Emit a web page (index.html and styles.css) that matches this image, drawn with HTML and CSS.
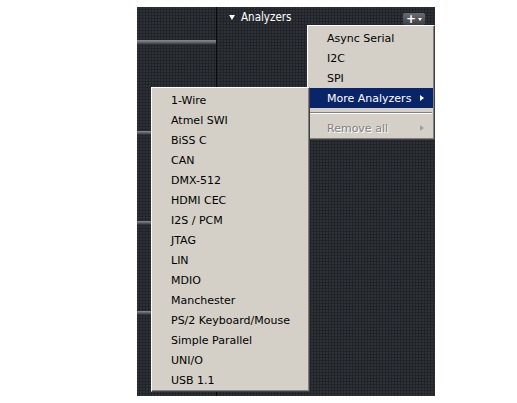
FILE: index.html
```html
<!DOCTYPE html>
<html>
<head>
<meta charset="utf-8">
<link rel="stylesheet" href="styles.css">
</head>
<body>
<div class="panel">
  <div class="side">
    <div class="seg first"></div>
    <div class="seg"></div>
    <div class="seg"></div>
    <div class="seg"></div>
    <div class="seg last"></div>
  </div>
  <div class="divider"></div>
  <div class="main">
    <div class="header">
      <span class="caret"></span>
      <span class="title">Analyzers</span>
      <span class="addbtn"><span class="plus">+</span><span class="dd"></span></span>
    </div>
  </div>

  <div class="menu menu-top">
    <div class="item">Async Serial</div>
    <div class="item">I2C</div>
    <div class="item">SPI</div>
    <div class="item active">More Analyzers<span class="arrow"></span></div>
    <div class="sep"></div>
    <div class="item disabled">Remove all<span class="arrow"></span></div>
  </div>

  <div class="menu menu-sub">
    <div class="item">1-Wire</div>
    <div class="item">Atmel SWI</div>
    <div class="item">BiSS C</div>
    <div class="item">CAN</div>
    <div class="item">DMX-512</div>
    <div class="item">HDMI CEC</div>
    <div class="item">I2S / PCM</div>
    <div class="item">JTAG</div>
    <div class="item">LIN</div>
    <div class="item">MDIO</div>
    <div class="item">Manchester</div>
    <div class="item">PS/2 Keyboard/Mouse</div>
    <div class="item">Simple Parallel</div>
    <div class="item">UNI/O</div>
    <div class="item">USB 1.1</div>
  </div>
</div>
</body>
</html>
```

FILE: styles.css
```css
html, body {
  margin: 0;
  padding: 0;
  background: #ffffff;
}

body {
  padding: 7px 0 0 137px;
  font-family: "DejaVu Sans", sans-serif;
}

.panel {
  position: relative;
  width: 298px;
  height: 389px;
  display: flex;
  background-color: #202327;
  background-image: radial-gradient(circle at 1px 1px, #2e3238 0.8px, transparent 1.2px);
  background-size: 3px 3px;
}

.side {
  width: 79px;
  display: flex;
  flex-direction: column;
}

.seg {
  height: 90px;
  flex: none;
  background: linear-gradient(to bottom, transparent 0, transparent 86px, #8a8c90 86px, #5a5c60 88px, #2a2d31 90px);
}

.seg.first {
  height: 38px;
  background: linear-gradient(to bottom, transparent 0, transparent 33px, #8a8c90 33px, #6a6c70 35px, #3a3d41 37px, transparent 38px);
}

.seg.last {
  flex: 1;
  background: none;
}

.divider {
  width: 1px;
  background: #0a0b0d;
}

.main {
  flex: 1;
  display: flex;
  flex-direction: column;
}

.header {
  height: 20px;
  display: flex;
  align-items: center;
  padding-left: 12px;
  padding-right: 10px;
  color: #ffffff;
  font-family: "DejaVu Sans Condensed", "DejaVu Sans", sans-serif;
  font-size: 11.5px;
}

.caret {
  width: 0;
  height: 0;
  border-left: 3px solid transparent;
  border-right: 3px solid transparent;
  border-top: 5px solid #ffffff;
  margin-right: 6px;
}

.title {
  flex: 1;
  line-height: 20px;
}

.addbtn {
  width: 22px;
  height: 12px;
  margin-top: 4px;
  border-radius: 2px;
  background: linear-gradient(to bottom, #6a6c70, #3c3e42);
  display: flex;
  align-items: center;
  justify-content: center;
  gap: 2px;
}

.plus {
  font-family: "DejaVu Sans", sans-serif;
  font-weight: bold;
  font-size: 12px;
  line-height: 12px;
  color: #ffffff;
}

.dd {
  width: 0;
  height: 0;
  border-left: 2px solid transparent;
  border-right: 2px solid transparent;
  border-top: 3px solid #ffffff;
}

.menu {
  position: absolute;
  background: #d4d0c8;
  border-top: 1px solid #ffffff;
  border-left: 1px solid #ffffff;
  border-right: 1px solid #404040;
  border-bottom: 1px solid #404040;
  box-shadow: inset -1px -1px 0 #808080, inset 1px 1px 0 #d4d0c8;
  padding: 2px 1px 1px 1px;
  font-size: 11px;
  color: #000000;
}

.menu-top {
  left: 170px;
  top: 18px;
  width: 124px;
}

.menu-sub {
  left: 14px;
  top: 80px;
  width: 155px;
}

.item {
  position: relative;
  height: 20px;
  line-height: 21px;
  padding-left: 18px;
  white-space: nowrap;
}

.item.active {
  background: #0a246a;
  color: #ffffff;
}

.item.disabled {
  color: #808080;
  text-shadow: 1px 1px 0 #ffffff;
}

.arrow {
  position: absolute;
  right: 9px;
  top: 7px;
  width: 0;
  height: 0;
  border-top: 3px solid transparent;
  border-bottom: 3px solid transparent;
  border-left: 4px solid currentColor;
}

.item.disabled .arrow {
  border-left-color: #a0a0a0;
}

.sep {
  height: 10px;
  background: linear-gradient(to bottom, transparent 4px, #808080 4px, #808080 5px, #ffffff 5px, #ffffff 6px, transparent 6px);
  margin: 0 1px;
}
```
